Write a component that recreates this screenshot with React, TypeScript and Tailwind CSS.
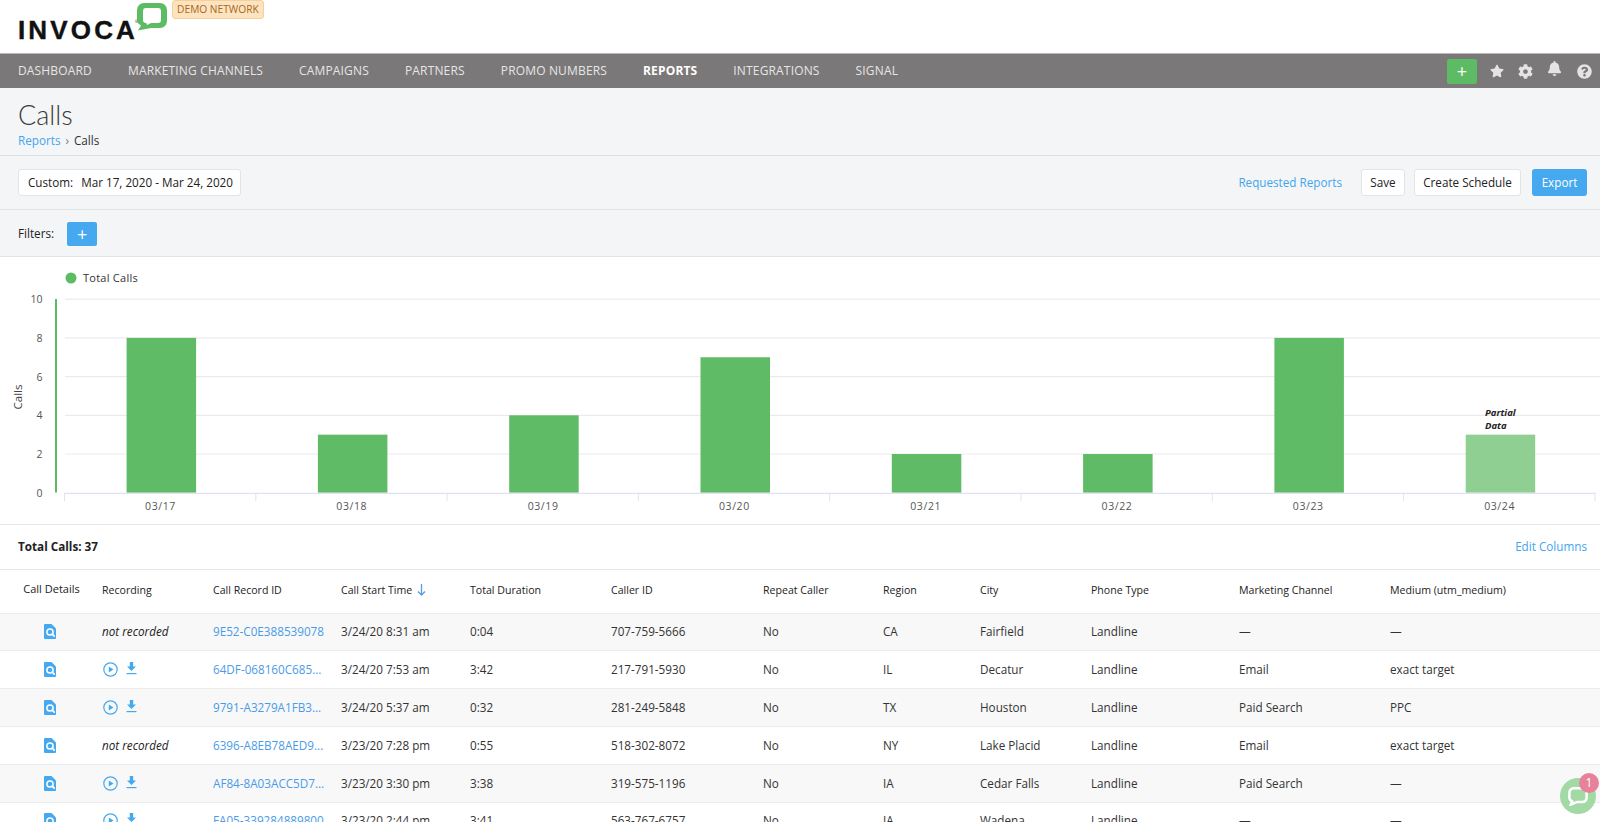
import { FaBell, FaCog, FaQuestionCircle, FaStar } from 'react-icons/fa';

const navItems = ['Dashboard', 'Marketing Channels', 'Campaigns', 'Partners', 'Promo Numbers', 'Reports', 'Integrations', 'Signal'];
const bars = [8, 3, 4, 7, 2, 2, 8, 3];
const days = ['03/17', '03/18', '03/19', '03/20', '03/21', '03/22', '03/23', '03/24'];

const columns = [
  { label: 'Call Details', width: 'w-[102px]' },
  { label: 'Recording', width: 'w-[111px]' },
  { label: 'Call Record ID', width: 'w-[128px]' },
  { label: 'Call Start Time', width: 'w-[129px]' },
  { label: 'Total Duration', width: 'w-[141px]' },
  { label: 'Caller ID', width: 'w-[152px]' },
  { label: 'Repeat Caller', width: 'w-[120px]' },
  { label: 'Region', width: 'w-[97px]' },
  { label: 'City', width: 'w-[111px]' },
  { label: 'Phone Type', width: 'w-[148px]' },
  { label: 'Marketing Channel', width: 'w-[151px]' },
  { label: 'Medium (utm_medium)', width: 'w-[210px]' },
];

const rows = [
  { recorded: false, id: '9E52-C0E388539078', start: '3/24/20 8:31 am', duration: '0:04', caller: '707-759-5666', region: 'CA', city: 'Fairfield', channel: '—', medium: '—' },
  { recorded: true, id: '64DF-068160C685...', start: '3/24/20 7:53 am', duration: '3:42', caller: '217-791-5930', region: 'IL', city: 'Decatur', channel: 'Email', medium: 'exact target' },
  { recorded: true, id: '9791-A3279A1FB3...', start: '3/24/20 5:37 am', duration: '0:32', caller: '281-249-5848', region: 'TX', city: 'Houston', channel: 'Paid Search', medium: 'PPC' },
  { recorded: false, id: '6396-A8EB78AED9...', start: '3/23/20 7:28 pm', duration: '0:55', caller: '518-302-8072', region: 'NY', city: 'Lake Placid', channel: 'Email', medium: 'exact target' },
  { recorded: true, id: 'AF84-8A03ACC5D7...', start: '3/23/20 3:30 pm', duration: '3:38', caller: '319-575-1196', region: 'IA', city: 'Cedar Falls', channel: 'Paid Search', medium: '—' },
  { recorded: true, id: 'FA05-339284889800', start: '3/23/20 2:44 pm', duration: '3:41', caller: '563-767-6757', region: 'IA', city: 'Wadena', channel: '—', medium: '—' },
];

function LogoBubble() {
  return (
    <svg width="30" height="28" viewBox="0 0 30 28" className="mt-[3px] shrink-0">
      <path d="M7 0h16a7 7 0 0 1 7 7v11a7 7 0 0 1-7 7H14L1 27.500 4 22.500C1.500 21 0 19.500 0 17V7a7 7 0 0 1 7-7z" fill="#5dbb63" />
      <rect x="6" y="5" width="18" height="15" rx="3" fill="#fff" />
      <path d="M9 19h7l-6 3z" fill="#fff" />
    </svg>
  );
}

function DetailsIcon() {
  return (
    <svg width="12" height="15" viewBox="0 0 12 15" className="mx-auto block">
      <path d="M1 0h6.500L12 4.500V14a1 1 0 0 1-1 1H1a1 1 0 0 1-1-1V1a1 1 0 0 1 1-1z" fill="#46a9ef" />
      <circle cx="6" cy="8" r="3.100" fill="none" stroke="#fff" strokeWidth="1.500" />
      <path d="M8.200 10.200l2 2" stroke="#fff" strokeWidth="1.700" strokeLinecap="round" />
    </svg>
  );
}

function RecordingIcons() {
  return (
    <div className="flex items-center gap-[8px] pl-[1px]">
      <svg width="15" height="15" viewBox="0 0 15 15">
        <circle cx="7.500" cy="7.500" r="6.700" fill="none" stroke="#46a9ef" strokeWidth="1.200" />
        <path d="M5.800 4.500l4.700 3-4.700 3z" fill="#46a9ef" />
      </svg>
      <svg width="11" height="13" viewBox="0 0 11 13" className="-mt-[2px]">
        <path d="M3.800 0h3.400v4.500h2.800L5.500 9 1 4.500h2.800z" fill="#46a9ef" />
        <rect x="0.500" y="11" width="10" height="1.200" fill="#46a9ef" />
      </svg>
    </div>
  );
}

function CallsChart() {
  const zeroY = 492.7;
  const step = 19.35;
  return (
    <svg width="1600" height="267" viewBox="0 257 1600 267" className="block">
      <circle cx="71" cy="278" r="5.500" fill="#5dbb63" />
      <text x="83" y="282" className="text-[11px] fill-[#333] tracking-[0.25px]">Total Calls</text>
      {[0, 2, 4, 6, 8, 10].map((v) => (
        <g key={v}>
          {v > 0 && <line x1="65" x2="1600" y1={zeroY - v * step} y2={zeroY - v * step} stroke="#ebebef" strokeWidth="1.200" />}
          <text x="42.500" y={zeroY - v * step + 4} textAnchor="end" className="text-[10.500px] fill-[#555]">{v}</text>
        </g>
      ))}
      <text transform="translate(22 397) rotate(-90)" textAnchor="middle" className="text-[11.500px] fill-[#444]">Calls</text>
      <rect x="55" y="299" width="2" height="193.500" fill="#5dbb63" />
      {bars.map((v, i) => (
        <rect key={i} x={126.6 + i * 191.3} y={zeroY - v * step} width="69.500" height={v * step} fill={i === 7 ? '#8fd092' : '#5fbb65'} />
      ))}
      <line x1="64" x2="1596" y1="493.300" y2="493.300" stroke="#e0e4f2" strokeWidth="1.300" />
      {Array.from({ length: 9 }, (_, i) => (
        <line key={i} x1={64.5 + i * 191.3} x2={64.5 + i * 191.3} y1="493" y2="501" stroke="#e0e4f2" />
      ))}
      {days.map((d, i) => (
        <text key={d} x={160.5 + i * 191.3} y="510" textAnchor="middle" className="text-[10.500px] fill-[#555] tracking-[0.6px]">{d}</text>
      ))}
      <text x="1485" y="416" className="text-[9.500px] font-bold italic fill-[#222]">Partial</text>
      <text x="1485" y="429" className="text-[9.500px] font-bold italic fill-[#222]">Data</text>
    </svg>
  );
}

export default function App() {
  return (
    <div className="relative h-[822px] w-[1600px] overflow-hidden bg-white font-['Open_Sans',sans-serif] text-[11.700px] text-[#333]">
      <header className="flex h-[53px] items-start pl-[18px]">
        <span className="mt-[15px] font-['Liberation_Sans',sans-serif] text-[26px] leading-[30px] font-bold tracking-[3.150px] text-[#111] [-webkit-text-stroke:0.4px_#111]">
          INVOC<span className="tracking-normal">A</span>
        </span>
        <span className="mt-[19px] w-[2px] text-[4px] leading-[5px] text-[#111]">®</span>
        <LogoBubble />
        <span className="ml-[5px] flex h-[19px] w-[92px] items-center justify-center rounded-[3px] border border-[#f7d097] bg-[#fde4c0] text-[10.200px] text-[#a8661c]">DEMO NETWORK</span>
      </header>

      <nav className="flex h-[35px] items-center justify-between border-t border-[#b9b9b9] bg-[#7a7878] pr-[8px] pl-[18px]">
        <div className="flex gap-[36px] text-[12px] tracking-[0.16px]">
          {navItems.map((item) => (
            <a key={item} className={item === 'Reports' ? 'font-bold text-white uppercase' : 'text-[#e6e6e6] uppercase'}>{item}</a>
          ))}
        </div>
        <div className="flex items-center text-[#e4e4e4]">
          <button className="flex h-[25px] w-[30px] items-center justify-center rounded-[2px] bg-[#5dbb63] text-[18px] leading-none text-white">+</button>
          <FaStar className="ml-[13px] text-[14px]" />
          <FaCog className="ml-[14px] text-[15px]" />
          <FaBell className="mb-[6px] ml-[14px] text-[15px]" />
          <FaQuestionCircle className="ml-[15px] text-[15px]" />
        </div>
      </nav>

      <div className="h-[68px] border-b border-[#dedfe2] bg-[#f4f5f7] pt-[10px] pl-[18px]">
        <h1 className="font-['Lato',sans-serif] text-[27px] leading-[34px] font-light text-[#3a3a3a]">Calls</h1>
        <div className="flex items-center gap-[5px]">
          <a className="text-[#42a5ee]">Reports</a>
          <span className="text-[#777]">›</span>
          <span>Calls</span>
        </div>
      </div>

      <div className="flex h-[54px] items-center justify-between border-b border-[#e2e3e6] bg-[#f4f5f7] pr-[13px] pl-[18px]">
        <div className="flex h-[27px] w-[223px] items-center rounded-[3px] border border-[#e4e4e4] bg-white pl-[9px] whitespace-nowrap text-[#222]">
          <span className="font-medium">Custom:</span>
          <span className="ml-[8px]">Mar 17, 2020 - Mar 24, 2020</span>
        </div>
        <div className="flex items-center">
          <a className="mr-[19px] text-[#42a5ee]">Requested Reports</a>
          <button className="h-[27px] w-[44px] rounded-[3px] border border-[#e4e4e4] bg-white text-[#222]">Save</button>
          <button className="ml-[9px] h-[27px] w-[107px] rounded-[3px] border border-[#e4e4e4] bg-white text-[#222]">Create Schedule</button>
          <button className="ml-[11px] h-[27px] w-[55px] rounded-[3px] bg-[#46a9ef] text-white">Export</button>
        </div>
      </div>

      <div className="flex h-[47px] items-center border-b border-[#e2e3e6] bg-[#f4f5f7] pt-[1px] pl-[18px]">
        <span className="font-medium text-[#222]">Filters:</span>
        <button className="ml-[13px] flex h-[24px] w-[30px] items-center justify-center rounded-[2px] bg-[#46a9ef] text-[18px] leading-none text-white">+</button>
      </div>

      <section className="border-b border-[#e6e6e6]">
        <CallsChart />
      </section>

      <div className="flex h-[45px] items-center justify-between border-b border-[#e6e6e6] pr-[13px] pl-[18px]">
        <span className="font-bold text-[#222]">Total Calls: 37</span>
        <a className="text-[#42a5ee]">Edit Columns</a>
      </div>

      <table className="w-[1600px] table-fixed border-collapse">
        <colgroup>
          {columns.map((c) => <col key={c.label} className={c.width} />)}
        </colgroup>
        <thead>
          <tr className="h-[43px] border-b border-[#ececec] text-left text-[10.600px] text-[#222]">
            {columns.map((c, i) => (
              <th key={c.label} className={i === 0 ? 'pb-[5px] pl-[1px] text-center text-[11px] font-medium' : 'font-medium'}>
                {c.label}
                {c.label === 'Call Start Time' && (
                  <svg width="9" height="12" viewBox="0 0 9 12" className="ml-[5px] inline-block align-[-2px]">
                    <path d="M4.500 0v11M1 7.500l3.500 3.500L8 7.500" fill="none" stroke="#5b9be0" strokeWidth="1.300" />
                  </svg>
                )}
              </th>
            ))}
          </tr>
        </thead>
        <tbody>
          {rows.map((r, i) => (
            <tr key={r.id} className={i % 2 === 0 ? 'h-[37.900px] border-b border-[#ececec] bg-[#f8f8f8] last:h-[36px]' : 'h-[37.900px] border-b border-[#ececec] bg-white last:h-[36px]'}>
              <td className="pr-[3px]"><DetailsIcon /></td>
              <td>{r.recorded ? <RecordingIcons /> : <span className="text-[#222] italic">not recorded</span>}</td>
              <td className="text-[#4a9be8]">{r.id}</td>
              <td>{r.start}</td>
              <td>{r.duration}</td>
              <td>{r.caller}</td>
              <td>No</td>
              <td>{r.region}</td>
              <td>{r.city}</td>
              <td>Landline</td>
              <td>{r.channel}</td>
              <td>{r.medium}</td>
            </tr>
          ))}
        </tbody>
      </table>

      <div className="absolute top-[778px] left-[1560px] flex h-[36px] w-[36px] items-center justify-center rounded-full bg-[#a3d9a5]">
        <svg width="20" height="19" viewBox="0 0 22 21">
          <path d="M6 1.500h10a4.500 4.500 0 0 1 4.500 4.500v6a4.500 4.500 0 0 1-4.500 4.500H10L3 19.500l1.500-3.500C2.500 15 1.500 14 1.500 12V6A4.500 4.500 0 0 1 6 1.500z" fill="none" stroke="#fff" strokeWidth="2.800" />
        </svg>
      </div>
      <div className="absolute top-[773px] left-[1579px] flex h-[20px] w-[20px] items-center justify-center rounded-full bg-[#e8829b] text-[12px] text-white">1</div>
    </div>
  );
}
